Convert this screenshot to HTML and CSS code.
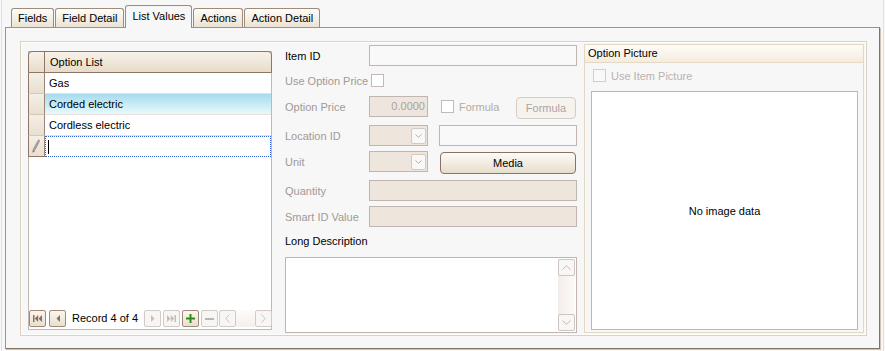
FILE: index.html
```html
<!DOCTYPE html>
<html lang="en">

<head>
    <meta charset="UTF-8">
    <meta name="viewport" content="width=device-width, initial-scale=1.0">
    <title>List Values</title>
    <link rel="stylesheet" href="styles.css">
</head>

<body>
    <div class="window">
        <div class="tabs">
            <div class="tab">Fields</div>
            <div class="tab">Field Detail</div>
            <div class="tab active">List Values</div>
            <div class="tab">Actions</div>
            <div class="tab">Action Detail</div>
        </div>
        <div class="tab-panel">
            <div class="group">
                <!-- option list grid -->
                <div class="grid">
                    <div class="grid-header">
                        <div class="indicator"></div>
                        <div class="cell">Option List</div>
                    </div>
                    <div class="row">
                        <div class="indicator"></div>
                        <div class="cell">Gas</div>
                    </div>
                    <div class="row selected">
                        <div class="indicator"></div>
                        <div class="cell">Corded electric</div>
                    </div>
                    <div class="row">
                        <div class="indicator"></div>
                        <div class="cell">Cordless electric</div>
                    </div>
                    <div class="row editing">
                        <div class="indicator">
                            <svg width="15" height="19" viewBox="0 0 15 19">
                                <path d="M4.6 14.6 L9.6 5.2" stroke="#a89c94" stroke-width="2.6" fill="none" />
                                <path d="M9 4.6 L10.4 5.4 L11 4.2 L9.6 3.5 Z" fill="#8a7c74" />
                                <path d="M3.6 16.8 L3.7 14.2 L5.8 15.3 Z" fill="#6f625a" />
                            </svg>
                        </div>
                        <div class="cell"><span class="caret"></span></div>
                    </div>
                    <div class="navigator">
                        <div class="nav-btn">
                            <svg width="9" height="7" viewBox="0 0 9 7">
                                <rect x="0" y="0" width="1.5" height="7" fill="#8e6f5d" />
                                <path d="M5.2 0 L1.7 3.5 L5.2 7Z M9 0 L5.5 3.5 L9 7Z" fill="#8e6f5d" />
                            </svg>
                        </div>
                        <div class="nav-btn prev">
                            <svg width="4" height="7" viewBox="0 0 4 7">
                                <path d="M4 0 L0.5 3.5 L4 7Z" fill="#8e6f5d" />
                            </svg>
                        </div>
                        <span class="record-info">Record 4 of 4</span>
                        <div class="nav-btn disabled">
                            <svg width="4" height="7" viewBox="0 0 4 7">
                                <path d="M0 0 L3.5 3.5 L0 7Z" fill="#c6beba" />
                            </svg>
                        </div>
                        <div class="nav-btn disabled gap">
                            <svg width="9" height="7" viewBox="0 0 9 7">
                                <path d="M0 0 L3.5 3.5 L0 7Z M3.8 0 L7.3 3.5 L3.8 7Z" fill="#c6beba" />
                                <rect x="7.5" y="0" width="1.5" height="7" fill="#c6beba" />
                            </svg>
                        </div>
                        <div class="nav-btn gap">
                            <svg width="9" height="9" viewBox="0 0 9 9">
                                <path d="M3.5 0h2v3.5h3.5v2h-3.5v3.5h-2v-3.5h-3.5v-2h3.5z" fill="#2c8d1c" />
                            </svg>
                        </div>
                        <div class="nav-btn disabled gap">
                            <svg width="9" height="2" viewBox="0 0 9 2">
                                <rect x="0" y="0" width="9" height="2" fill="#bcb4b0" />
                            </svg>
                        </div>
                        <div class="nav-btn disabled scroll-left">
                            <svg width="5" height="9" viewBox="0 0 5 9">
                                <polyline points="4.5,0.5 0.8,4.5 4.5,8.5" stroke="#ccc4c0" fill="none" />
                            </svg>
                        </div>
                        <div class="scroll-track"></div>
                        <div class="nav-btn disabled scroll-right">
                            <svg width="5" height="9" viewBox="0 0 5 9">
                                <polyline points="0.5,0.5 4.2,4.5 0.5,8.5" stroke="#ccc4c0" fill="none" />
                            </svg>
                        </div>
                    </div>
                </div>

                <!-- item details -->
                <div class="details">
                    <div class="field-row">
                        <span class="field-label enabled">Item ID</span>
                        <div class="input wide"></div>
                    </div>
                    <div class="field-row price-check">
                        <span class="field-label">Use Option Price</span>
                        <div class="check"></div>
                    </div>
                    <div class="field-row option-price">
                        <span class="field-label">Option Price</span>
                        <div class="input small disabled value">0.0000</div>
                        <div class="check formula-check"></div>
                        <span class="check-label">Formula</span>
                        <div class="button disabled formula-btn">Formula</div>
                    </div>
                    <div class="field-row location">
                        <span class="field-label">Location ID</span>
                        <div class="input small disabled combo">
                            <div class="combo-btn">
                                <svg width="7" height="4" viewBox="0 0 7 4">
                                    <polyline points="0.5,0.5 3.5,3.3 6.5,0.5" stroke="#b8aeaa" fill="none" />
                                </svg>
                            </div>
                        </div>
                        <div class="input location-text"></div>
                    </div>
                    <div class="field-row unit">
                        <span class="field-label">Unit</span>
                        <div class="input small disabled combo">
                            <div class="combo-btn">
                                <svg width="7" height="4" viewBox="0 0 7 4">
                                    <polyline points="0.5,0.5 3.5,3.3 6.5,0.5" stroke="#b8aeaa" fill="none" />
                                </svg>
                            </div>
                        </div>
                        <div class="button media-btn">Media</div>
                    </div>
                    <div class="field-row quantity">
                        <span class="field-label">Quantity</span>
                        <div class="input wide disabled"></div>
                    </div>
                    <div class="field-row smart-id">
                        <span class="field-label">Smart ID Value</span>
                        <div class="input wide disabled"></div>
                    </div>
                    <div class="memo-label">Long Description</div>
                    <div class="memo">
                        <div class="vscroll">
                            <div class="scroll-btn">
                                <svg width="9" height="5" viewBox="0 0 9 5">
                                    <polyline points="0.5,4.5 4.5,0.8 8.5,4.5" stroke="#c2b8b4" fill="none" />
                                </svg>
                            </div>
                            <div class="vscroll-track"></div>
                            <div class="scroll-btn">
                                <svg width="9" height="5" viewBox="0 0 9 5">
                                    <polyline points="0.5,0.5 4.5,4.2 8.5,0.5" stroke="#c2b8b4" fill="none" />
                                </svg>
                            </div>
                        </div>
                    </div>
                </div>

                <!-- picture -->
                <div class="picture-group">
                    <div class="picture-header">Option Picture</div>
                    <div class="picture-check">
                        <div class="check disabled"></div>
                        <span class="check-label">Use Item Picture</span>
                    </div>
                    <div class="picture-box">No image data</div>
                </div>
            </div>
        </div>
    </div>
</body>

</html>
```

FILE: styles.css
```css
* {
    box-sizing: border-box;
}

body {
    margin: 0;
    padding: 0 1px;
    background: #f7f7f7;
    font-family: "Liberation Sans", Arial, sans-serif;
    font-size: 11px;
    color: #000;
}

.window {
    height: 351px;
    border-left: 1px solid #e8e0d3;
    border-right: 1px solid #e8e0d3;
    padding: 5px 3px 2px;
    display: flex;
    flex-direction: column;
}

/* Tabs */
.tabs {
    height: 22px;
    display: flex;
    align-items: flex-end;
    padding-left: 6px;
}

.tab {
    height: 19px;
    line-height: 18px;
    padding: 0 6px;
    margin-right: 1px;
    border: 1px solid #9d8b7c;
    border-bottom: none;
    border-radius: 3px 3px 0 0;
    background: linear-gradient(#fefdfa, #ebe3d3);
}

.tab.active {
    height: 23px;
    line-height: 21px;
    padding: 0 6px;
    margin: 0 1px -1px 0;
    background: #f7f7f7;
    position: relative;
    z-index: 1;
}

.tab-panel {
    height: 322px;
    border: 1px solid #a39283;
    border-right-color: #85725f;
    border-bottom-color: #85725f;
    box-shadow: 1px 1px 0 #cfc3b4;
    background: #f7f7f7;
    padding: 13px 12px 12px 14px;
}

.group {
    height: 100%;
    border: 1px solid #ddd1bf;
    box-shadow: inset 0 0 0 1px #fdfdfb;
    padding: 2px 1px 2px 7px;
    display: flex;
    align-items: flex-start;
}

/* Grid */
.grid {
    width: 244px;
    height: 279px;
    margin-top: 7px;
    border: 1px solid #c3b7b3;
    background: #fff;
    display: flex;
    flex-direction: column;
}

.grid-header {
    display: flex;
    height: 22px;
    margin: -1px -1px 0;
    border: 1px solid #8e7565;
    border-radius: 4px 4px 0 0;
    background: linear-gradient(#f7f2ea, #e7dcc9);
    line-height: 20px;
}

.grid-header .indicator {
    width: 16px;
    border-right: 1px solid #8e7565;
}

.grid-header .cell {
    padding-left: 5px;
}

.row {
    display: flex;
    height: 21px;
    line-height: 20px;
}

.row .indicator {
    width: 17px;
    margin-left: -1px;
    border-left: 1px solid #8e7565;
    border-right: 1px solid #9c8574;
    border-bottom: 1px solid #d6c8b6;
    background: linear-gradient(#f4efe6, #e8dfd0);
}

.row .cell {
    flex: 1;
    padding-left: 4px;
    border-bottom: 1px solid #ecdfdb;
}

.row.selected .cell {
    background: linear-gradient(#a7dbed, #e6fafd);
}

.row.editing .cell {
    border: 1px dotted #2f5fd0;
    padding-left: 2px;
    display: flex;
    align-items: center;
}

.caret {
    width: 1px;
    height: 14px;
    background: #000;
}

.row.editing .indicator {
    border-bottom-color: #8e7565;
}

.navigator {
    margin-top: auto;
    margin-bottom: 2px;
    height: 17px;
    display: flex;
}

.nav-btn {
    width: 17px;
    height: 17px;
    border: 1px solid #a28977;
    border-radius: 2px;
    background: linear-gradient(#faf6ef, #e8dfcf);
    display: flex;
    align-items: center;
    justify-content: center;
}

.nav-btn.disabled {
    border-color: #d3c9c5;
    background: #f8f6f4;
}

.nav-btn.prev {
    margin-left: 3px;
}

.nav-btn.gap {
    margin-left: 2px;
}

.nav-btn.scroll-left {
    margin-left: 1px;
}

.nav-btn.scroll-right {
    margin-right: -1px;
}

.record-info {
    width: 72px;
    margin-left: 6px;
    line-height: 17px;
}

.scroll-track {
    flex: 1;
    background: linear-gradient(#fdfcfb, #f3efeb);
}

/* Details */
.details {
    width: 292px;
    margin-left: 13px;
    margin-top: 1px;
}

.field-row {
    display: flex;
    align-items: center;
    height: 21px;
}

.field-label {
    width: 84px;
    color: #a19996;
}

.field-label.enabled {
    color: #000;
}

.input {
    height: 21px;
    border: 1px solid #c1b5b1;
    background: #f9f9f9;
}

.input.disabled {
    background: #eee6dd;
}

.input.wide {
    width: 208px;
}

.input.small {
    width: 59px;
}

.input.value {
    text-align: right;
    padding-right: 2px;
    line-height: 19px;
    color: #aba39f;
}

.check {
    width: 13px;
    height: 13px;
    border: 1px solid #c4b9b5;
    background: #fff;
}

.check.disabled {
    border-color: #d6cdc9;
    background: #f9f9f9;
}

.check-label {
    margin-left: 5px;
    color: #b3aba7;
}

.price-check {
    margin-top: 4px;
}

.price-check .check {
    margin-left: 2px;
}

.option-price {
    margin-top: 5px;
}

.formula-check {
    margin-left: 13px;
}

.button {
    height: 22px;
    border: 1px solid #8c7262;
    border-radius: 4px;
    background: linear-gradient(#fdfbf8, #e7ddcc);
    display: flex;
    align-items: center;
    justify-content: center;
}

.button.disabled {
    border-color: #d6ccc6;
    background: #f6f3ef;
    color: #aca4a0;
}

.formula-btn {
    width: 60px;
    margin-left: auto;
    margin-right: 1px;
    margin-top: 2px;
}

.location {
    margin-top: 8px;
}

.combo {
    display: flex;
    justify-content: flex-end;
    align-items: center;
    padding-right: 1px;
}

.combo-btn {
    width: 15px;
    height: 16px;
    border: 1px solid #d2c8c4;
    border-radius: 2px;
    background: #faf8f6;
    display: flex;
    align-items: center;
    justify-content: center;
}

.location-text {
    width: 138px;
    margin-left: 11px;
}

.unit {
    margin-top: 5px;
}

.media-btn {
    width: 136px;
    margin-left: 12px;
    margin-top: 2px;
}

.quantity {
    margin-top: 8px;
}

.smart-id {
    margin-top: 5px;
}

.memo-label {
    margin-top: 7px;
    line-height: 15px;
}

.memo {
    margin-top: 8px;
    height: 76px;
    border: 1px solid #c1b5b1;
    background: #fff;
    padding: 1px;
    display: flex;
    justify-content: flex-end;
}

.vscroll {
    width: 17px;
    display: flex;
    flex-direction: column;
    background: linear-gradient(90deg, #f3ede9, #fcfaf8);
}

.scroll-btn {
    height: 17px;
    border: 1px solid #cfc4c0;
    border-radius: 2px;
    background: #f9f7f5;
    display: flex;
    align-items: center;
    justify-content: center;
}

.vscroll-track {
    flex: 1;
}

/* Picture */
.picture-group {
    width: 280px;
    height: 289px;
    margin-left: 7px;
    border: 1px solid #e5d8c3;
    display: flex;
    flex-direction: column;
}

.picture-header {
    height: 18px;
    line-height: 17px;
    padding-left: 3px;
    border-bottom: 1px solid #e6d8c2;
    background: linear-gradient(#fefcf9, #f4ecdf);
}

.picture-check {
    display: flex;
    align-items: center;
    margin: 6px 0 0 8px;
    height: 13px;
}

.picture-check .check-label {
    color: #bab2ae;
}

.picture-box {
    flex: 1;
    margin: 9px 5px 2px 6px;
    border: 1px solid #c1b5b3;
    background: #fff;
    display: flex;
    align-items: center;
    justify-content: center;
}
```
